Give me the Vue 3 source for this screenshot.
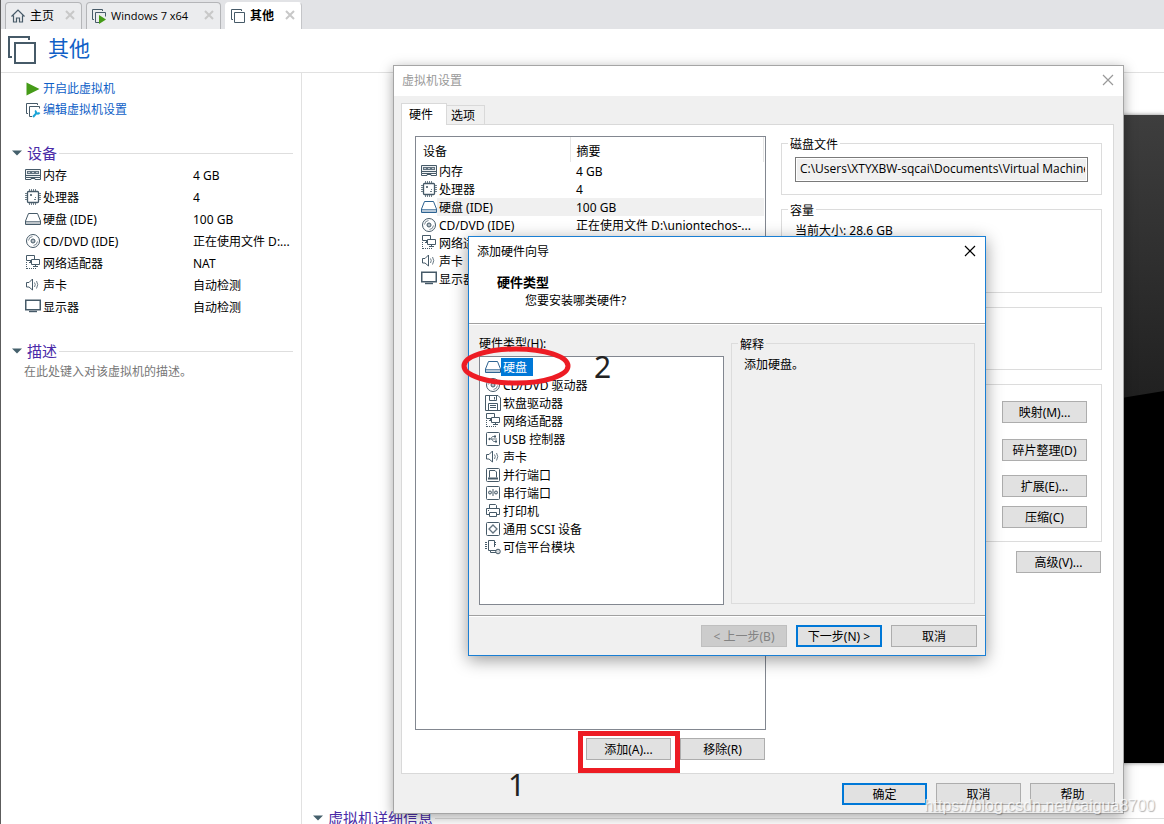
<script setup>
import { ref } from 'vue'

const devices = [
  { icon: 'memory', name: '内存', brief: '4 GB', detail: '4 GB' },
  { icon: 'cpu', name: '处理器', brief: '4', detail: '4' },
  { icon: 'disk', name: '硬盘 (IDE)', brief: '100 GB', detail: '100 GB', selected: true },
  { icon: 'cd', name: 'CD/DVD (IDE)', brief: '正在使用文件 D:...', detail: '正在使用文件 D:\\uniontechos-...' },
  { icon: 'net', name: '网络适配器', brief: 'NAT', detail: 'NAT' },
  { icon: 'sound', name: '声卡', brief: '自动检测', detail: '自动检测' },
  { icon: 'display', name: '显示器', brief: '自动检测', detail: '自动检测' },
]

const hardwareTypes = [
  { icon: 'disk', name: '硬盘' },
  { icon: 'cd', name: 'CD/DVD 驱动器' },
  { icon: 'floppy', name: '软盘驱动器' },
  { icon: 'net', name: '网络适配器' },
  { icon: 'usb', name: 'USB 控制器' },
  { icon: 'sound', name: '声卡' },
  { icon: 'parallel', name: '并行端口' },
  { icon: 'serial', name: '串行端口' },
  { icon: 'printer', name: '打印机' },
  { icon: 'scsi', name: '通用 SCSI 设备' },
  { icon: 'tpm', name: '可信平台模块' },
]

const tabs = [
  { icon: 'home', name: '主页' },
  { icon: 'vmrun', name: 'Windows 7 x64', wide: true },
  { icon: 'vm', name: '其他', active: true },
]

const chosen = ref(0)
const diskFile = ref('C:\\Users\\XTYXBW-sqcai\\Documents\\Virtual Machines\\其他.vmdk')
</script>

<template>
  <div class="app">
    <svg class="sprite" aria-hidden="true">
      <symbol id="memory" viewBox="0 0 16 16">
        <path d="M.5 2.500h15v8H.5z" fill="#eef1f3" stroke="currentColor" />
        <path d="M2 4h12v3H2z" fill="currentColor" opacity=".85" />
        <path d="M3 5.500h2M7 5.500h2M11 5.500h2" stroke="#c3cbd1" />
        <path d="M.5 10.500v2h5.500v-1h4v1h5.500v-2M1 8.500h14" fill="none" stroke="currentColor" />
      </symbol>
      <symbol id="cpu" viewBox="0 0 16 16">
        <path d="M4.500 0v3M6.500 0v3M8.500 0v3M10.500 0v3M4.500 13v3M6.500 13v3M8.500 13v3M10.500 13v3M0 4.500h3M0 6.500h3M0 8.500h3M0 10.500h3M13 4.500h3M13 6.500h3M13 8.500h3M13 10.500h3" stroke="currentColor" opacity=".75" />
        <rect x="2.500" y="2.500" width="11" height="11" rx="1" fill="#fff" stroke="currentColor" stroke-width="1.300" />
        <path d="M5 5h2v2H5zM10 8h1v1h-1zM9 10h2v1H9z" fill="currentColor" opacity=".8" />
      </symbol>
      <symbol id="disk" viewBox="0 0 16 16">
        <path d="M3.500 2.500h9l3 7.500v3.500H.5V10z" fill="#fff" stroke="currentColor" />
        <path d="M.5 10.500h15M1 12h14" stroke="currentColor" fill="none" opacity=".7" />
      </symbol>
      <symbol id="cd" viewBox="0 0 16 16">
        <circle cx="8" cy="8" r="6.500" fill="#fff" stroke="currentColor" />
        <circle cx="8" cy="8" r="2" fill="#b6bfc6" stroke="currentColor" />
        <path d="M3.500 7.500a4.500 4.500 0 0 1 4-4M12.500 8.500a4.500 4.500 0 0 1-4 4" fill="none" stroke="currentColor" opacity=".7" />
      </symbol>
      <symbol id="net" viewBox="0 0 16 16">
        <path d="M1.500 7v7M2 13.500h9" fill="none" stroke="currentColor" stroke-dasharray="1 1" />
        <path d="M1.500.5h8v5h-8zM4 7.500h3M5.500 5v3" fill="#fff" stroke="currentColor" />
        <path d="M6.500 4.500h8v5h-8zM10.500 10v2M8 11.500h5" fill="#fff" stroke="currentColor" />
      </symbol>
      <symbol id="sound" viewBox="0 0 16 16">
        <path d="M1.500 5.500v4.500h2.500L7.500 13V2L4 5.500z" fill="#fff" stroke="currentColor" />
        <path d="M9.500 5.500q1.500 2 0 4.500M11.500 4q2.500 3.500 0 7.500" fill="none" stroke="currentColor" opacity=".8" />
      </symbol>
      <symbol id="display" viewBox="0 0 16 16">
        <rect x=".75" y="1.250" width="14.500" height="9.500" fill="#fff" stroke="currentColor" stroke-width="1.500" />
        <path d="M4 12.500h8" fill="none" stroke="currentColor" stroke-width="1.400" />
      </symbol>
      <symbol id="floppy" viewBox="0 0 16 16">
        <path d="M.5.5h12.500l2.500 2.500v12.500H.5zM4.500.5v5h7v-5M9.500 2v2.500M3.500 15.500v-7h9v7M5 10.500h6M5 12.500h6" fill="none" stroke="currentColor" />
      </symbol>
      <symbol id="usb" viewBox="0 0 16 16">
        <rect x="1.500" y="1.500" width="13" height="13" rx="1" fill="#fff" stroke="currentColor" />
        <path d="M4 8h8M5.500 8l2-2.500h2M6.500 8l2 2.500h2" fill="none" stroke="currentColor" opacity=".8" />
        <path d="M3 8l2-1.500v3zM9 4.500h2v2H9zM10 9.500h2v2h-2z" fill="currentColor" />
      </symbol>
      <symbol id="parallel" viewBox="0 0 16 16">
        <rect x="1.500" y="1.500" width="13" height="13" rx="1" fill="#fff" stroke="currentColor" />
        <path d="M4.500 10.500v-7h5.500l1.500 1.500v5.500" fill="none" stroke="currentColor" />
        <path d="M3 10.500h10v2H3z" fill="currentColor" />
      </symbol>
      <symbol id="serial" viewBox="0 0 16 16">
        <rect x="1.500" y="1.500" width="13" height="13" rx="1" fill="#fff" stroke="currentColor" />
        <path d="M8 4v7" stroke="currentColor" />
        <circle cx="5" cy="7.500" r="1.500" fill="#d5dade" stroke="currentColor" />
        <circle cx="11" cy="7.500" r="1.500" fill="#d5dade" stroke="currentColor" />
      </symbol>
      <symbol id="printer" viewBox="0 0 16 16">
        <path d="M4.500 5.500v-4h6l1 1v3M4 11.500H1.500v-6h13v6H12" fill="#fff" stroke="currentColor" />
        <path d="M4.500 9.500h7v4h-7z" fill="#fff" stroke="currentColor" />
        <path d="M3 7.500h1" stroke="currentColor" />
      </symbol>
      <symbol id="scsi" viewBox="0 0 16 16">
        <rect x="1.500" y="1.500" width="13" height="13" rx="1" fill="#fff" stroke="currentColor" />
        <path d="M8 4l4 4-4 4-4-4z" fill="none" stroke="currentColor" stroke-width="1.300" opacity=".85" />
      </symbol>
      <symbol id="tpm" viewBox="0 0 16 16">
        <path d="M9.500 8V1.500h-6v10h3M0 3.500h2M0 5.500h2M0 7.500h2M0 9.500h2M10 3.500h1M10 5.500h1" fill="none" stroke="currentColor" />
        <path d="M5.500 11.500h6v2h-6z" fill="#fff" stroke="currentColor" />
        <circle cx="13" cy="12.500" r="2.300" fill="#d5dade" stroke="currentColor" />
      </symbol>
      <symbol id="home" viewBox="0 0 16 16">
        <path d="M1.500 8.500L8 2l6.500 6.500M3.500 7.500v6.500h3v-4h3v4h3V7.500" fill="none" stroke="currentColor" stroke-width="1.200" />
      </symbol>
      <symbol id="vm" viewBox="0 0 16 16">
        <path d="M3 11.500H1.500v-10h10V3M4.500 4.500h10v10h-10z" fill="none" stroke="currentColor" />
      </symbol>
      <symbol id="vmrun" viewBox="0 0 16 16">
        <path d="M3 11.500H1.500v-10h10V3M8 14.500H4.500v-10h10v4" fill="none" stroke="currentColor" />
        <path d="M8 7l7 4.500L8 16z" fill="#459b18" />
      </symbol>
      <symbol id="vmedit" viewBox="0 0 16 16">
        <path d="M3 11.500H1.500v-10h11V3M7 14.500H4.500v-10h10v2" fill="none" stroke="currentColor" />
        <path d="M8 15l4-4.500" stroke="#1aa5d8" stroke-width="2" />
        <path d="M11 8.500a2 2 0 1 0 3.500 2" fill="none" stroke="#1aa5d8" stroke-width="2" />
      </symbol>
      <symbol id="play" viewBox="0 0 16 16"><path d="M1.500 1.500L14.500 8l-13 6.500z" fill="#459b18" /></symbol>
      <symbol id="cross" viewBox="0 0 12 12"><path d="M1 1l10 10M11 1L1 11" fill="none" stroke="currentColor" stroke-width="1.200" /></symbol>
      <symbol id="cross-bold" viewBox="0 0 10 10"><path d="M1 1l8 8M9 1L1 9" fill="none" stroke="currentColor" stroke-width="2" /></symbol>
      <symbol id="caret" viewBox="0 0 10 6"><path d="M0 .5h10L5 5.500z" fill="#45606c" /></symbol>
    </svg>

    <nav class="tabbar">
      <div v-for="t in tabs" :key="t.name" class="tab" :class="{ wide: t.wide, active: t.active }">
        <svg class="icon"><use :href="'#' + t.icon" /></svg>
        <span class="tab-name">{{ t.name }}</span>
        <button class="tab-close" type="button" aria-label="关闭"><svg><use href="#cross-bold" /></svg></button>
      </div>
    </nav>

    <header class="head">
      <svg class="head-icon" viewBox="0 0 28 28"><path d="M4 21H1V1h20v3M7 7h20v20H7z" fill="none" stroke="#465a68" stroke-width="2" /></svg>
      <h1>其他</h1>
    </header>

    <div class="content">
      <aside class="side">
        <div class="actions">
          <a href="#"><svg class="icon"><use href="#play" /></svg>开启此虚拟机</a>
          <a href="#"><svg class="icon"><use href="#vmedit" /></svg>编辑虚拟机设置</a>
        </div>
        <h2 class="section"><svg class="caret"><use href="#caret" /></svg>设备</h2>
        <table class="side-table">
          <tbody>
            <tr v-for="d in devices" :key="d.name">
              <td><span class="cell"><svg class="icon"><use :href="'#' + d.icon" /></svg><span class="label">{{ d.name }}</span></span></td>
              <td class="val">{{ d.brief }}</td>
            </tr>
          </tbody>
        </table>
        <h2 class="section"><svg class="caret"><use href="#caret" /></svg>描述</h2>
        <p class="desc">在此处键入对该虚拟机的描述。</p>
      </aside>
      <main class="stage">
        <svg class="screen" viewBox="0 0 742 648" preserveAspectRatio="none">
          <defs>
            <linearGradient id="glow" x1="0" y1="0" x2="0" y2="1">
              <stop offset="0" stop-color="#3e3e3e" />
              <stop offset=".6" stop-color="#202020" />
            </linearGradient>
          </defs>
          <rect width="742" height="648" fill="#000" />
          <path d="M0 0h742v276Q400 330 0 480z" fill="url(#glow)" />
        </svg>
        <h2 class="section details"><svg class="caret"><use href="#caret" /></svg>虚拟机详细信息</h2>
      </main>
    </div>

    <section class="dialog" role="dialog" aria-label="虚拟机设置">
      <div class="title faded">
        <span>虚拟机设置</span>
        <button class="close" type="button" aria-label="关闭"><svg><use href="#cross" /></svg></button>
      </div>
      <div class="dlg-tabs" role="tablist">
        <button class="dlg-tab on" type="button" role="tab" aria-selected="true">硬件</button>
        <button class="dlg-tab" type="button" role="tab" aria-selected="false">选项</button>
      </div>
      <div class="panel">
        <div class="left">
          <div class="list">
            <table class="dev-table">
              <thead><tr><th class="first">设备</th><th>摘要</th></tr></thead>
              <tbody>
                <tr v-for="d in devices" :key="d.name" :class="{ sel: d.selected }">
                  <td><span class="cell"><svg class="icon"><use :href="'#' + d.icon" /></svg><span class="label">{{ d.name }}</span></span></td>
                  <td class="val">{{ d.detail }}</td>
                </tr>
              </tbody>
            </table>
          </div>
          <div class="list-buttons">
            <span class="marked"><button class="btn" type="button">添加(A)...</button></span>
            <button class="btn" type="button">移除(R)</button>
          </div>
        </div>
        <div class="right">
          <fieldset class="box file">
            <legend>磁盘文件</legend>
            <input v-model="diskFile" type="text" aria-label="磁盘文件" readonly />
          </fieldset>
          <fieldset class="box size">
            <legend>容量</legend>
            <p>当前大小: 28.6 GB</p>
          </fieldset>
          <fieldset class="box info"></fieldset>
          <fieldset class="box tools">
            <button class="btn" type="button">映射(M)...</button>
            <button class="btn gap-l" type="button">碎片整理(D)</button>
            <button class="btn gap-m" type="button">扩展(E)...</button>
            <button class="btn gap-s" type="button">压缩(C)</button>
          </fieldset>
          <button class="btn adv" type="button">高级(V)...</button>
        </div>
      </div>
      <div class="dlg-foot">
        <span class="mark one">1</span>
        <button class="btn primary" type="button">确定</button>
        <button class="btn" type="button">取消</button>
        <button class="btn" type="button">帮助</button>
      </div>
    </section>

    <section class="wizard" role="dialog" aria-label="添加硬件向导">
      <div class="title">
        <span>添加硬件向导</span>
        <button class="close" type="button" aria-label="关闭"><svg><use href="#cross" /></svg></button>
      </div>
      <div class="wiz-head">
        <h3>硬件类型</h3>
        <p>您要安装哪类硬件?</p>
      </div>
      <div class="wiz-body">
        <div class="types">
          <span id="types-label" class="types-label">硬件类型(H):</span>
          <ul class="type-list" role="listbox" aria-labelledby="types-label">
            <li v-for="(h, i) in hardwareTypes" :key="h.name" role="option" :aria-selected="i === chosen" :class="{ on: i === chosen }" @click="chosen = i">
              <svg class="icon"><use :href="'#' + h.icon" /></svg><span>{{ h.name }}</span>
            </li>
          </ul>
          <svg class="ring" viewBox="0 0 110 40"><ellipse cx="55" cy="20" rx="52" ry="17" fill="none" stroke="#ed1c24" stroke-width="5" /></svg>
          <span class="mark two">2</span>
        </div>
        <fieldset class="box explain">
          <legend>解释</legend>
          <p>添加硬盘。</p>
        </fieldset>
      </div>
      <div class="wiz-foot">
        <button class="btn" type="button" disabled>&lt; 上一步(B)</button>
        <button class="btn primary" type="button">下一步(N) &gt;</button>
        <button class="btn" type="button">取消</button>
      </div>
    </section>

    <span class="watermark">https://blog.csdn.net/caigua8700</span>
  </div>
</template>

<style>
body { margin: 0; overflow: hidden; }
</style>

<style scoped>
.app {
  position: relative;
  box-sizing: border-box;
  height: 100vh;
  overflow: hidden;
  display: flex;
  flex-direction: column;
  border-left: 1px solid #5c5c5c;
  background: #fff;
  color: #000;
  font: 12px/18px "Noto Sans", "Noto Sans CJK SC", sans-serif;
}
.app * { box-sizing: border-box; }
.sprite { position: absolute; width: 0; height: 0; }
h1, h2, h3, p, ul { margin: 0; padding: 0; font-weight: 400; }
button, input { font: inherit; color: inherit; }
.icon { width: 16px; height: 16px; flex: none; color: #465a68; }

.tabbar {
  display: flex;
  gap: 4px;
  flex: none;
  height: 29px;
  padding: 2px 4px 0;
  background: #e2e3e6;
}
.tab {
  display: flex;
  align-items: center;
  width: 77px;
  padding: 0 6px 0 4px;
  border: 1px solid #b4b5b8;
  border-bottom: 0;
  border-radius: 4px 4px 0 0;
  background: #ebecee;
}
.tab.wide { width: 135px; }
.tab.wide .tab-name { font-family: "Open Sans", sans-serif; font-size: 11px; }
.tab.active { background: #fff; border-color: #fff #c4c5c8 #fff #fff; font-weight: 700; }
.tab-name { margin-left: 4px; white-space: nowrap; }
.tab-close { margin-left: auto; padding: 0 0 2px; border: 0; background: none; color: #c8c8c8; line-height: 0; }
.tab-close svg { width: 10px; height: 10px; }

.head {
  display: flex;
  flex: none;
  height: 44px;
  padding: 7px 7px 0;
  border-bottom: 1px solid #e1e1e1;
}
.head-icon { width: 28px; height: 28px; }
.head h1 { margin-left: 12px; font-size: 21px; line-height: 24px; color: #0f5fc7; }

.content { display: flex; flex: 1; min-height: 0; }
.side { flex: none; width: 301px; padding: 5px 8px 0 11px; border-right: 1px solid #e1e1e1; }
.actions { display: flex; flex-direction: column; align-items: flex-start; padding-left: 13px; }
.actions a { display: flex; align-items: center; gap: 2px; height: 21px; color: #0f5fc7; text-decoration: none; }
.section { display: flex; align-items: center; height: 22px; font-size: 15px; line-height: 22px; color: #4a2ba8; }
.section::after { content: ""; flex: 1; height: 1px; margin-left: 2px; background: #dedede; }
.side .section { margin-top: 22px; }
.caret { width: 10px; height: 6px; margin-right: 5px; flex: none; }
.side-table { width: 100%; border-collapse: collapse; table-layout: fixed; }
.side-table td { height: 22px; padding: 0; white-space: nowrap; }
.side-table td:first-child { width: 181px; padding-left: 13px; }
.cell { display: flex; align-items: center; }
.label { flex: 1; padding: 2px 0 0 2px; line-height: 16px; }
.side-table .val { padding-top: 2px; line-height: 16px; }
.desc { padding: 1px 0 0 12px; color: #777; }

.stage { flex: 1; min-width: 0; padding: 42px 0 0 11px; }
.screen { display: block; width: calc(100% - 109px); height: 648px; margin-left: 109px; box-shadow: 0 0 4px rgba(0, 0, 0, .5); }
.details { margin-top: 44px; }

.title { display: flex; align-items: center; justify-content: space-between; background: #fff; }
.close { padding: 0 0 2px; border: 0; background: none; line-height: 0; }
.close svg { width: 12px; height: 12px; }
.btn {
  width: 85px;
  height: 22px;
  padding: 2px 0 0;
  border: 1px solid #adadad;
  background: #e1e1e1;
  line-height: 18px;
  white-space: nowrap;
}
.btn.primary { border: 2px solid #0078d7; line-height: 16px; }
.btn:disabled { border-color: #bfbfbf; background: #ccc; color: #838383; }

.dialog {
  position: absolute;
  left: 392px;
  right: 40px;
  top: 65px;
  border: 1px solid #a5a5a5;
  background: #f0f0f0;
  box-shadow: 0 3px 12px rgba(0, 0, 0, .35);
}
.dialog .title { height: 30px; padding: 0 9px 0 8px; }
.faded { color: #999; }
.dlg-tabs { display: flex; align-items: flex-end; height: 28px; padding-left: 7px; }
.dlg-tab { width: 38px; height: 19px; padding: 2px 9px 0 4px; border: 1px solid #d9d9d9; border-width: 1px 1px 0 0; background: #f0f0f0; line-height: 16px; white-space: nowrap; }
.dlg-tab.on { position: relative; width: 46px; height: 22px; margin-bottom: -1px; padding: 0 13px 0 7px; border-left-width: 1px; background: #fff; }
.panel {
  display: grid;
  grid-template-columns: 351fr 321fr;
  gap: 15px;
  margin: 0 9px 0 7px;
  padding: 11px 11px 13px 13px;
  border: 1px solid #d9d9d9;
  background: #fff;
}
.left { display: flex; flex-direction: column; min-width: 0; }
.list { min-height: 594px; border: 1px solid #828790; background: #fff; }
.dev-table { width: calc(100% - 1px); border-collapse: collapse; table-layout: fixed; }
.dev-table th { height: 25px; padding: 5px 0 0 6px; border-right: 1px solid #e5e5e5; font-weight: 400; text-align: left; }
.dev-table th.first { width: 154px; padding-left: 7px; }
.dev-table td { height: 18px; padding: 0 0 0 5px; white-space: nowrap; }
.dev-table td.val { padding: 2px 0 0 6px; line-height: 16px; }
.sel .label, .sel .val { background: #f0f0f0; }
.sel .icon, .on .icon { color: #2d6391; }
.list-buttons { display: flex; justify-content: flex-end; gap: 9px; margin: 8px 1px 0 0; }
.marked { position: relative; display: flex; }
.marked::after { content: ""; position: absolute; inset: -7px -9px -13px -8px; border: 5px solid #ed1c24; pointer-events: none; }

.right { display: flex; flex-direction: column; min-width: 0; }
.box { min-width: 0; margin: 0; padding: 0 13px; border: 1px solid #dcdcdc; }
.box legend { margin-left: -7px; padding: 2px 2px 0; line-height: 13px; }
.file { padding: 6px 13px 12px; }
.file input { display: block; width: 100%; height: 25px; padding: 0 2px 4px 4px; border: 1px solid #7a7a7a; outline: 0; background: #f0f0f0; box-shadow: inset 0 0 0 1px #fff; font-family: "Open Sans", "Noto Sans CJK SC", sans-serif; }
.size { min-height: 91px; margin-top: 7px; padding-top: 5px; }
.info { min-height: 63px; margin-top: 14px; }
.tools { min-height: 158px; margin-top: 14px; padding: 16px 14px 13px; }
.tools .btn { display: block; margin-left: auto; }
.tools .gap-l { margin-top: 16px; }
.tools .gap-m { margin-top: 14px; }
.tools .gap-s { margin-top: 9px; }
.adv { margin: 9px 1px 0 auto; }
.dlg-foot { position: relative; display: flex; justify-content: flex-end; gap: 9px; padding: 9px 8px 8px; }
.mark { position: absolute; font-size: 30px; line-height: 30px; color: #222; }
.one { left: 114px; top: -4px; }

.wizard {
  position: absolute;
  left: 467px;
  right: 178px;
  top: 236px;
  border: 1px solid #1a7fd4;
  background: #f0f0f0;
  box-shadow: 0 4px 16px rgba(0, 0, 0, .4);
}
.wizard .title { height: 29px; padding: 0 9px 0 8px; }
.wiz-head { padding: 7px 28px 13px; border-bottom: 1px solid #a0a0a0; background: #fff; box-shadow: 0 1px #fff; }
.wiz-head h3 { font-size: 13px; font-weight: 700; }
.wiz-head p { padding: 1px 0 0 28px; }
.wiz-body { display: grid; grid-template-columns: 245fr 244fr; gap: 7px; padding: 10px; }
.types { position: relative; display: flex; flex-direction: column; }
.types-label { padding: 1px 0 3px; }
.type-list { min-height: 249px; padding: 1px 5px; border: 1px solid #828790; background: #fff; list-style: none; }
.type-list li { display: flex; align-items: center; height: 18px; }
.type-list span { padding: 2px 2px 0; line-height: 16px; }
.type-list .on span { padding-right: 6px; background: #0078d7; color: #fff; }
.ring { position: absolute; left: -18px; top: 12px; width: 110px; height: 40px; pointer-events: none; }
.two { left: 115px; top: 18px; }
.explain { margin: 2px 0 1px; padding: 5px 12px 0; }
.explain legend { margin-left: -6px; }
.wiz-foot { display: flex; justify-content: flex-end; gap: 9px; padding: 9px 8px 8px; border-top: 1px solid #a0a0a0; box-shadow: inset 0 1px #fff; }
.wiz-foot .btn { width: 86px; }

.watermark {
  position: absolute;
  right: 9px;
  bottom: 8px;
  font: 16px/20px "Liberation Sans", Arial, sans-serif;
  color: rgba(255, 255, 255, .75);
  text-shadow: 1px 1px 1px rgba(0, 0, 0, .3);
  pointer-events: none;
}
</style>
